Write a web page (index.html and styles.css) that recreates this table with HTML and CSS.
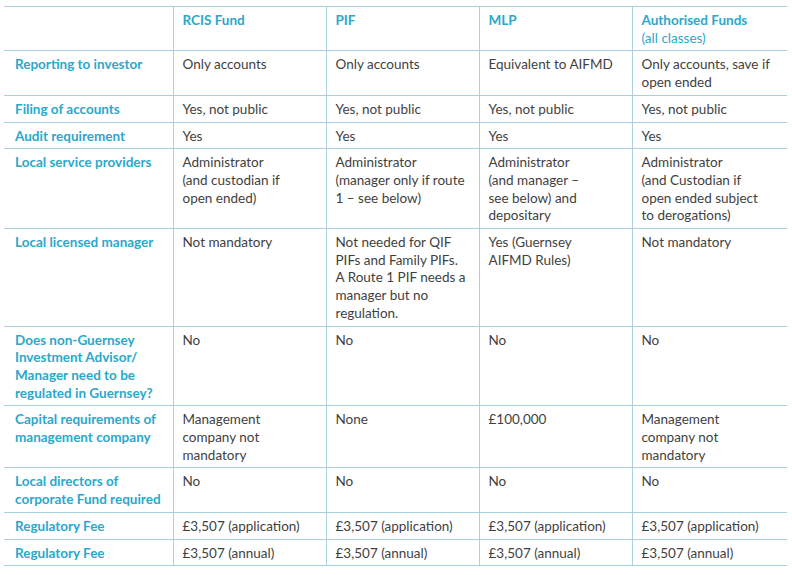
FILE: index.html
```html
<!DOCTYPE html>
<html>
<head>
<meta charset="utf-8">
<link rel="stylesheet" href="styles.css">
</head>
<body>
<table class="cmp">
  <colgroup>
    <col class="c0"><col class="c1"><col class="c2"><col class="c3"><col class="c4">
  </colgroup>
  <thead>
    <tr>
      <th></th>
      <th>RCIS Fund</th>
      <th>PIF</th>
      <th>MLP</th>
      <th>Authorised Funds<br><span class="sub">(all classes)</span></th>
    </tr>
  </thead>
  <tbody>
    <tr>
      <th>Reporting to investor</th>
      <td>Only accounts</td>
      <td>Only accounts</td>
      <td>Equivalent to AIFMD</td>
      <td>Only accounts, save if<br>open ended</td>
    </tr>
    <tr>
      <th>Filing of accounts</th>
      <td>Yes, not public</td>
      <td>Yes, not public</td>
      <td>Yes, not public</td>
      <td>Yes, not public</td>
    </tr>
    <tr>
      <th>Audit requirement</th>
      <td>Yes</td>
      <td>Yes</td>
      <td>Yes</td>
      <td>Yes</td>
    </tr>
    <tr>
      <th>Local service providers</th>
      <td>Administrator<br>(and custodian if<br>open ended)</td>
      <td>Administrator<br>(manager only if route<br>1 – see below)</td>
      <td>Administrator<br>(and manager –<br>see below) and<br>depositary</td>
      <td>Administrator<br>(and Custodian if<br>open ended subject<br>to derogations)</td>
    </tr>
    <tr>
      <th>Local licensed manager</th>
      <td>Not mandatory</td>
      <td>Not needed for QIF<br>PIFs and Family PIFs.<br>A Route 1 PIF needs a<br>manager but no<br>regulation.</td>
      <td>Yes (Guernsey<br>AIFMD Rules)</td>
      <td>Not mandatory</td>
    </tr>
    <tr>
      <th>Does non-Guernsey<br>Investment Advisor/<br>Manager need to be<br>regulated in Guernsey?</th>
      <td>No</td>
      <td>No</td>
      <td>No</td>
      <td>No</td>
    </tr>
    <tr>
      <th>Capital requirements of<br>management company</th>
      <td>Management<br>company not<br>mandatory</td>
      <td>None</td>
      <td>£100,000</td>
      <td>Management<br>company not<br>mandatory</td>
    </tr>
    <tr>
      <th>Local directors of<br>corporate Fund required</th>
      <td>No</td>
      <td>No</td>
      <td>No</td>
      <td>No</td>
    </tr>
    <tr>
      <th>Regulatory Fee</th>
      <td>£3,507 (application)</td>
      <td>£3,507 (application)</td>
      <td>£3,507 (application)</td>
      <td>£3,507 (application)</td>
    </tr>
    <tr>
      <th>Regulatory Fee</th>
      <td>£3,507 (annual)</td>
      <td>£3,507 (annual)</td>
      <td>£3,507 (annual)</td>
      <td>£3,507 (annual)</td>
    </tr>
  </tbody>
</table>
</body>
</html>
```
FILE: styles.css
```css
html, body {
  margin: 0;
  padding: 0;
  background: #ffffff;
}
body {
  padding: 6px 5px 0 4px;
  font-family: "Lato", "Open Sans", sans-serif;
  font-size: 13.5px;
  line-height: 17.7px;
  color: #3f3f3f;
}
.cmp {
  width: 783px;
  border-collapse: collapse;
  table-layout: fixed;
  border-top: 1px solid #a9d0df;
}
.c0 { width: 169px; }
.c1 { width: 153px; }
.c2 { width: 153px; }
.c3 { width: 153px; }
.c4 { width: 155px; }
.cmp th, .cmp td {
  text-align: left;
  vertical-align: top;
  padding: 5px 6px 3px 9px;
  border-bottom: 1px solid #a9d0df;
  border-left: 1px solid #a9d0df;
  font-weight: 400;
}
.cmp tr > :first-child {
  border-left: none;
  padding-left: 11px;
}
.cmp th {
  color: #2aa8cb;
  font-weight: 700;
}
.cmp .sub {
  font-weight: 400;
}
```
